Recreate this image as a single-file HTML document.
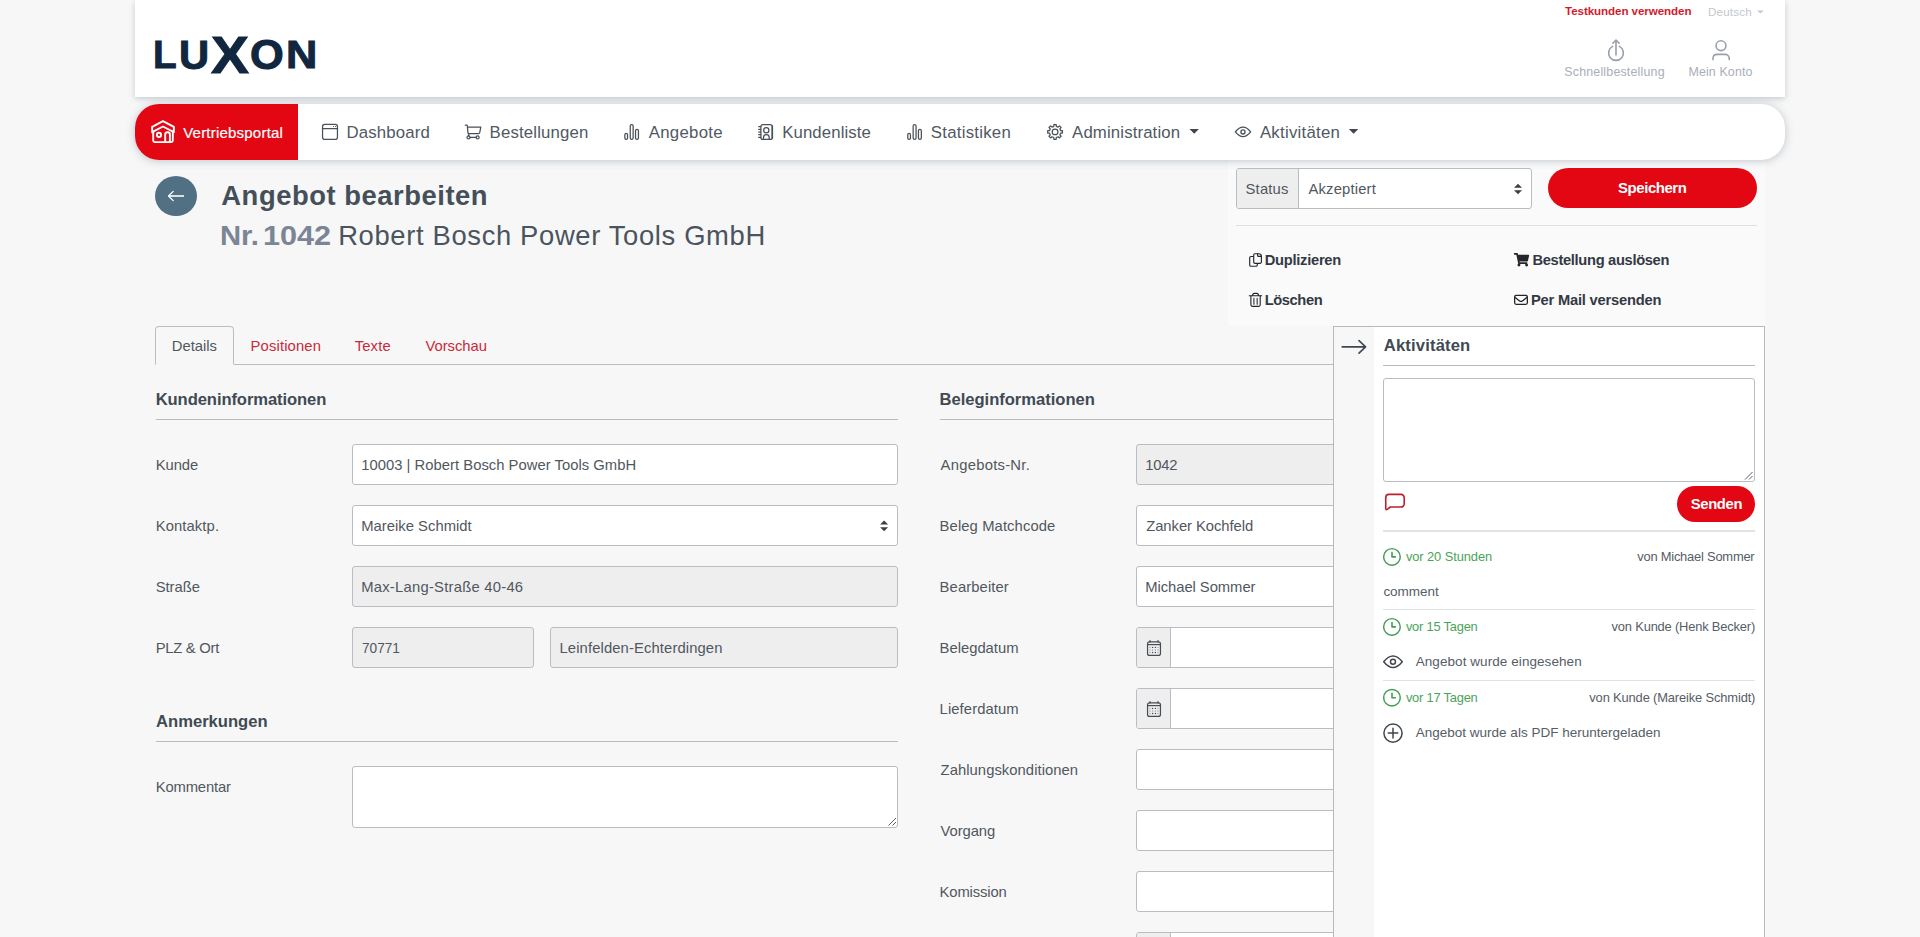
<!DOCTYPE html>
<html lang="de">
<head>
<meta charset="utf-8">
<title>Angebot bearbeiten</title>
<style>
*{box-sizing:border-box;margin:0;padding:0}
html,body{width:1920px;height:937px;overflow:hidden}
body{background:#f7f7f7;font-family:"Liberation Sans",Arial,sans-serif;color:#495057;font-size:15.3px;position:relative}
.t{position:absolute;white-space:nowrap;line-height:1;display:block;font-weight:normal;text-decoration:none}

.lg{font-weight:bold;color:#10273f;transform-origin:0 0;-webkit-text-stroke:1px #10273f}
#ico{position:absolute;left:0;top:0;width:1920px;height:937px;pointer-events:none;z-index:50}
#hdr{position:absolute;left:135px;top:0;width:1650px;height:97px;background:#fff;box-shadow:0 2px 6px rgba(60,80,100,.26)}
#nav{position:absolute;left:135px;top:104px;width:1650px;height:56px;background:#fff;border-radius:24px;box-shadow:0 1px 8px rgba(60,80,100,.30);overflow:hidden}
#navred{position:absolute;left:0;top:0;width:163px;height:56px;background:#e30613}
#sidebg{position:absolute;left:1228px;top:160px;width:537px;height:166px;background:#fafafa}

.inp{position:absolute;border:1px solid #b9bdc3;border-radius:3px;background:#fff}
.dis{background:#eeeeee}
.hr{position:absolute;height:1px;background:#b7bcc3}
.btn{position:absolute;background:#e30613;border-radius:22px}
#back{position:absolute;left:155px;top:175.8px;width:42px;height:40px;border-radius:50%;background:#527083}
#tab1{position:absolute;left:155px;top:326px;width:79px;height:39px;border:1px solid #b9bec6;border-bottom-color:#f7f7f7;border-radius:4px 4px 0 0;background:#f7f7f7}
#panel{position:absolute;left:1333px;top:326px;width:432px;height:620px;background:#fff;border:1px solid #b5bac2}
#strip{position:absolute;left:0;top:0;width:40px;height:100%;background:#f7f7f7}
.pre{position:absolute;left:0;top:0;height:100%;background:#eeeeee;border-right:1px solid #b9bdc3;border-radius:2px 0 0 2px}
</style>
</head>
<body>
<div id="sidebg"></div>
<header id="hdr"></header>
<nav id="nav"><div id="navred"></div></nav>
<div id="logo"><span class="t lg" style="left:153.24px;top:35.06px;font-size:41.6px;transform:scale(0.9304,0.9484)">L</span><span class="t lg" style="left:178.79px;top:34.98px;font-size:41.6px;transform:scale(1.0038,0.9645)">U</span><span class="t lg" style="left:211.1px;top:28.84px;font-size:52px;transform:scale(1.0941,0.9939)">X</span><span class="t lg" style="left:249.86px;top:33.02px;font-size:41.6px;transform:scale(1.0433,1.03)">O</span><span class="t lg" style="left:286.02px;top:35.06px;font-size:41.6px;transform:scale(1.0423,0.9484)">N</span></div>
<a class="t" style="left:1565.00px;top:5.00px;font-size:11.6px;letter-spacing:-0.079px;color:#d21a2c;font-weight:bold">Testkunden verwenden</a><span class="t" style="left:1707.90px;top:5.90px;font-size:11.6px;letter-spacing:0.217px;color:#c3c7ce">Deutsch</span><span class="t" style="left:1564.30px;top:65.60px;font-size:12.4px;letter-spacing:0.194px;color:#a9aeb8">Schnellbestellung</span><span class="t" style="left:1688.50px;top:65.60px;font-size:12.4px;letter-spacing:0.133px;color:#a9aeb8">Mein Konto</span>
<a class="t" style="left:183.20px;top:124.80px;font-size:15.0px;letter-spacing:0.214px;color:#ffffff;-webkit-text-stroke:.2px #fff">Vertriebsportal</a><a class="t" style="left:346.60px;top:124.80px;font-size:16.8px;letter-spacing:0.137px;color:#505962">Dashboard</a><a class="t" style="left:489.60px;top:124.80px;font-size:16.8px;letter-spacing:0.155px;color:#505962">Bestellungen</a><a class="t" style="left:648.80px;top:124.80px;font-size:16.8px;letter-spacing:0.271px;color:#505962">Angebote</a><a class="t" style="left:782.20px;top:124.80px;font-size:16.8px;letter-spacing:0.100px;color:#505962">Kundenliste</a><a class="t" style="left:930.80px;top:124.80px;font-size:16.8px;letter-spacing:0.250px;color:#505962">Statistiken</a><a class="t" style="left:1072.10px;top:124.80px;font-size:16.8px;letter-spacing:0.123px;color:#505962">Administration</a><a class="t" style="left:1259.90px;top:124.80px;font-size:16.8px;letter-spacing:0.260px;color:#505962">Aktivitäten</a>

<div id="back"></div>
<h1 class="t" style="left:221.30px;top:181.80px;font-size:27.4px;letter-spacing:0.535px;color:#454f5a;font-weight:bold">Angebot bearbeiten</h1>
<h2><span class="t" style="left:220.17px;top:221.80px;font-size:27.4px;color:#7b8595;transform-origin:0 0;transform:scaleX(1.0667);font-weight:bold">Nr.</span><span class="t" style="left:263.28px;top:221.80px;font-size:27.4px;color:#7b8595;transform-origin:0 0;transform:scaleX(1.1186);font-weight:bold">1042</span><span class="t" style="left:338.20px;top:221.80px;font-size:27.4px;letter-spacing:0.643px;color:#4a545e">Robert Bosch Power Tools GmbH</span></h2>

<div class="inp " style="left:1236px;top:168px;width:296px;height:41px"><div class="pre" style="width:62px"></div></div>
<span class="t" style="left:1245.50px;top:181.80px;font-size:14.8px;letter-spacing:0.200px;color:#50575e">Status</span><span class="t" style="left:1308.50px;top:181.80px;font-size:14.8px;letter-spacing:0.167px;color:#50575e">Akzeptiert</span>
<div class="btn" style="left:1548px;top:168px;width:209px;height:40px"></div><span class="t" style="left:1618.10px;top:181.00px;font-size:14.9px;letter-spacing:-0.412px;color:#ffffff;font-weight:bold">Speichern</span>
<div class="hr" style="left:1236px;top:225px;width:521px;background:#dcdfe3"></div>
<a class="t" style="left:1264.70px;top:252.90px;font-size:14.7px;letter-spacing:-0.260px;color:#333944;font-weight:bold">Duplizieren</a><a class="t" style="left:1532.50px;top:252.90px;font-size:14.7px;letter-spacing:-0.328px;color:#333944;font-weight:bold">Bestellung auslösen</a><a class="t" style="left:1264.70px;top:292.90px;font-size:14.7px;letter-spacing:-0.400px;color:#333944;font-weight:bold">Löschen</a><a class="t" style="left:1531.00px;top:292.90px;font-size:14.7px;letter-spacing:-0.200px;color:#333944;font-weight:bold">Per Mail versenden</a>

<div class="hr" style="left:155px;top:364px;width:1178px;background:#b9bec6"></div>
<div id="tab1"></div>
<a class="t" style="left:171.80px;top:338.70px;font-size:14.8px;letter-spacing:-0.033px;color:#50575e">Details</a><a class="t" style="left:250.60px;top:338.70px;font-size:14.8px;letter-spacing:0.133px;color:#c82a3b">Positionen</a><a class="t" style="left:354.70px;top:338.70px;font-size:14.8px;letter-spacing:0.150px;color:#c82a3b">Texte</a><a class="t" style="left:425.40px;top:338.70px;font-size:14.8px;letter-spacing:-0.014px;color:#c82a3b">Vorschau</a>

<!-- left column -->
<h5 class="t" style="left:155.70px;top:392.00px;font-size:16.6px;letter-spacing:-0.094px;color:#414a53;font-weight:bold">Kundeninformationen</h5>
<div class="hr" style="left:156px;top:419px;width:742px"></div>
<label class="t" style="left:155.70px;top:458.10px;font-size:14.8px;letter-spacing:-0.050px;color:#50575e">Kunde</label><div class="inp " style="left:352px;top:444px;width:546px;height:41px"></div><span class="t" style="left:361.20px;top:458.10px;font-size:14.8px;letter-spacing:0.022px;color:#50575e">10003 | Robert Bosch Power Tools GmbH</span>
<label class="t" style="left:155.70px;top:519.10px;font-size:14.8px;letter-spacing:0.100px;color:#50575e">Kontaktp.</label><div class="inp " style="left:352px;top:505px;width:546px;height:41px"></div><span class="t" style="left:361.20px;top:519.10px;font-size:14.8px;letter-spacing:0.021px;color:#50575e">Mareike Schmidt</span>
<label class="t" style="left:155.70px;top:580.10px;font-size:14.8px;letter-spacing:-0.040px;color:#50575e">Straße</label><div class="inp dis" style="left:352px;top:566px;width:546px;height:41px"></div><span class="t" style="left:361.20px;top:580.10px;font-size:14.8px;letter-spacing:0.240px;color:#50575e">Max-Lang-Straße 40-46</span>
<label class="t" style="left:155.70px;top:641.10px;font-size:14.8px;letter-spacing:-0.275px;color:#50575e">PLZ &amp; Ort</label><div class="inp dis" style="left:352px;top:627px;width:182px;height:41px"></div><span class="t" style="left:362.20px;top:641.10px;font-size:14.8px;color:#50575e;transform-origin:0 0;transform:scaleX(0.9220)">70771</span><div class="inp dis" style="left:550px;top:627px;width:348px;height:41px"></div><span class="t" style="left:559.50px;top:641.10px;font-size:14.8px;letter-spacing:0.114px;color:#50575e">Leinfelden-Echterdingen</span>
<h5 class="t" style="left:156.10px;top:714.40px;font-size:16.6px;letter-spacing:-0.010px;color:#414a53;font-weight:bold">Anmerkungen</h5>
<div class="hr" style="left:156px;top:741px;width:742px"></div>
<label class="t" style="left:155.70px;top:780.20px;font-size:14.8px;letter-spacing:-0.150px;color:#50575e">Kommentar</label><div class="inp " style="left:352px;top:766px;width:546px;height:62px"></div>

<!-- right column -->
<h5 class="t" style="left:939.60px;top:392.00px;font-size:16.6px;letter-spacing:-0.035px;color:#414a53;font-weight:bold">Beleginformationen</h5>
<div class="hr" style="left:940px;top:419px;width:400px"></div>
<label class="t" style="left:940.60px;top:458.10px;font-size:14.8px;letter-spacing:0.255px;color:#50575e">Angebots-Nr.</label><div class="inp dis" style="left:1136px;top:444px;width:300px;height:41px"></div><span class="t" style="left:1145.20px;top:458.10px;font-size:14.8px;letter-spacing:-0.200px;color:#50575e">1042</span>
<label class="t" style="left:939.60px;top:519.10px;font-size:14.8px;letter-spacing:0.100px;color:#50575e">Beleg Matchcode</label><div class="inp " style="left:1136px;top:505px;width:300px;height:41px"></div><span class="t" style="left:1146.20px;top:519.10px;font-size:14.8px;letter-spacing:-0.050px;color:#50575e">Zanker Kochfeld</span>
<label class="t" style="left:939.60px;top:580.10px;font-size:14.8px;letter-spacing:0.100px;color:#50575e">Bearbeiter</label><div class="inp " style="left:1136px;top:566px;width:300px;height:41px"></div><span class="t" style="left:1145.20px;top:580.10px;font-size:14.8px;letter-spacing:-0.054px;color:#50575e">Michael Sommer</span>
<label class="t" style="left:939.60px;top:641.10px;font-size:14.8px;letter-spacing:-0.011px;color:#50575e">Belegdatum</label><div class="inp " style="left:1136px;top:627px;width:300px;height:41px"><div class="pre" style="width:34px"></div></div>
<label class="t" style="left:939.60px;top:702.10px;font-size:14.8px;letter-spacing:0.090px;color:#50575e">Lieferdatum</label><div class="inp " style="left:1136px;top:688px;width:300px;height:41px"><div class="pre" style="width:34px"></div></div>
<label class="t" style="left:940.60px;top:763.10px;font-size:14.8px;letter-spacing:0.050px;color:#50575e">Zahlungskonditionen</label><div class="inp " style="left:1136px;top:749px;width:300px;height:41px"></div>
<label class="t" style="left:940.60px;top:824.10px;font-size:14.8px;letter-spacing:-0.100px;color:#50575e">Vorgang</label><div class="inp " style="left:1136px;top:810px;width:300px;height:41px"></div>
<label class="t" style="left:939.60px;top:885.10px;font-size:14.8px;letter-spacing:-0.138px;color:#50575e">Komission</label><div class="inp " style="left:1136px;top:871px;width:300px;height:41px"></div>
<div class="inp " style="left:1136px;top:932px;width:300px;height:41px"><div class="pre" style="width:34px"></div></div>

<!-- activity panel -->
<aside id="panel"><div id="strip"></div></aside>
<h5 class="t" style="left:1383.80px;top:337.70px;font-size:16.6px;letter-spacing:0.160px;color:#414a53;font-weight:bold">Aktivitäten</h5>
<div class="hr" style="left:1383px;top:365px;width:372px"></div>
<div class="inp " style="left:1383px;top:378px;width:372px;height:104px"></div>
<div class="btn" style="left:1677px;top:486px;width:78px;height:35.5px"></div><span class="t" style="left:1690.70px;top:497.30px;font-size:14.8px;letter-spacing:-0.320px;color:#ffffff;font-weight:bold">Senden</span>
<div class="hr" style="left:1383px;top:530px;width:372px;height:2px;background:#e2e3e5"></div>
<span class="t" style="left:1405.90px;top:551.30px;font-size:12.9px;letter-spacing:-0.092px;color:#4aa35a">vor 20 Stunden</span><span class="t" style="left:1637.20px;top:551.30px;font-size:12.9px;letter-spacing:-0.212px;color:#555d67">von Michael Sommer</span><span class="t" style="left:1383.40px;top:585.10px;font-size:13.5px;letter-spacing:-0.033px;color:#555d67">comment</span>
<div class="hr" style="left:1383px;top:609px;width:372px;background:#dfe2e5"></div>
<span class="t" style="left:1405.90px;top:621.20px;font-size:12.9px;letter-spacing:-0.218px;color:#4aa35a">vor 15 Tagen</span><span class="t" style="left:1611.60px;top:621.20px;font-size:12.9px;letter-spacing:-0.182px;color:#555d67">von Kunde (Henk Becker)</span><span class="t" style="left:1415.70px;top:654.90px;font-size:13.5px;letter-spacing:0.070px;color:#555d67">Angebot wurde eingesehen</span>
<div class="hr" style="left:1383px;top:680px;width:372px;background:#dfe2e5"></div>
<span class="t" style="left:1405.90px;top:692.00px;font-size:12.9px;letter-spacing:-0.218px;color:#4aa35a">vor 17 Tagen</span><span class="t" style="left:1589.30px;top:692.00px;font-size:12.9px;letter-spacing:-0.142px;color:#555d67">von Kunde (Mareike Schmidt)</span><span class="t" style="left:1415.70px;top:726.00px;font-size:13.5px;letter-spacing:0.008px;color:#555d67">Angebot wurde als PDF heruntergeladen</span>

<svg id="ico" viewBox="0 0 1920 937">
<g fill="none" stroke="#9aa0ab" stroke-width="1.6" stroke-linecap="round" stroke-linejoin="round">
<path d="M1612.6,46.4 A7.4,7.4 0 1 0 1619.4,46.4"/>
<path d="M1616,55 V40.2 M1612.9,43.2 L1616,40 L1619.1,43.2"/>
<circle cx="1721" cy="45.7" r="4.9"/>
<path d="M1713,59.6 V58 A4,4 0 0 1 1717,54.4 H1725 A4,4 0 0 1 1729.2,58 V59.6"/>
</g>
<path d="M1757,10.4 H1763.8 L1760.4,13.6Z" fill="#c3c7ce"/>
<g fill="none" stroke="#fff" stroke-width="1.9" stroke-linejoin="round" stroke-linecap="round">
<path d="M152.15,132.2 V126.9 L162.95,121.1 L173.85,126.9 V132.2 L162.95,126.5 Z"/>
<path d="M153.2,131.8 V140.6 A1.5,1.5 0 0 0 154.7,142.1 H171.3 A1.5,1.5 0 0 0 172.8,140.6 V131.8"/>
<circle cx="159" cy="134.9" r="2.1"/>
<path d="M165.2,142 V134.6 A2.35,2.35 0 0 1 169.9,134.6 V142"/>
</g>
<g fill="none" stroke="#495057" stroke-width="1.25" stroke-linejoin="round" stroke-linecap="round">
<rect x="322.55" y="124.35" width="14.9" height="15.1" rx="2.2"/><path d="M322.5,128.5 H337.5"/>
<path d="M465.3,125.2 H466.6 Q467.3,125.2 467.35,126 L467.9,132.6 Q468,133.6 469,133.6 H478.6 Q479.5,133.6 479.7,132.7 L480.8,127.1 H467.5"/>
<path d="M468.9,133.7 L468.6,135.9 M470,137.4 H476.1"/><circle cx="468.5" cy="137.4" r="1.5"/><circle cx="477.6" cy="137.4" r="1.5"/>
<rect x="624.85" y="133.30" width="2.7" height="6.15" rx="1.35"/><rect x="630.25" y="124.55" width="2.9" height="14.90" rx="1.45"/><rect x="635.55" y="129.30" width="2.9" height="10.15" rx="1.45"/>
<rect x="907.75" y="133.30" width="2.7" height="6.15" rx="1.35"/><rect x="913.15" y="124.55" width="2.9" height="14.90" rx="1.45"/><rect x="918.45" y="129.30" width="2.9" height="10.15" rx="1.45"/>
<rect x="760.9" y="124.55" width="11.3" height="14.9" rx="2"/>
<path d="M758.7,126.6 H760.6 M758.7,129.3 H760.6 M758.7,132 H760.6 M758.7,134.7 H760.6 M758.7,137.4 H760.6"/>
<circle cx="766.3" cy="130.2" r="2.6"/><path d="M763.5,139.4 V137.4 A2.85,2.85 0 0 1 769.2,137.4 V139.4"/>
<path d="M772.35,126 V138" stroke-width="1.5"/>
<path d="M1053.81,126.34 L1053.88,124.54 L1056.22,124.54 L1056.29,126.34 L1058.10,127.09 L1059.43,125.87 L1061.08,127.52 L1059.86,128.85 L1060.61,130.66 L1062.41,130.73 L1062.41,133.07 L1060.61,133.14 L1059.86,134.95 L1061.08,136.28 L1059.43,137.93 L1058.10,136.71 L1056.29,137.46 L1056.22,139.26 L1053.88,139.26 L1053.81,137.46 L1052.00,136.71 L1050.67,137.93 L1049.02,136.28 L1050.24,134.95 L1049.49,133.14 L1047.69,133.07 L1047.69,130.73 L1049.49,130.66 L1050.24,128.85 L1049.02,127.52 L1050.67,125.87 L1052.00,127.09Z"/><circle cx="1055.05" cy="131.9" r="2.85"/>
</g>
<circle cx="333.5" cy="126.5" r=".6" fill="#495057"/><circle cx="335.5" cy="126.5" r=".6" fill="#495057"/>
<path d="M1235.37,131.9 Q1243,122.47 1250.63,131.9 Q1243,141.33 1235.37,131.9Z" fill="none" stroke="#495057" stroke-width="1.35" stroke-linejoin="round"/><circle cx="1243" cy="131.9" r="2.05" fill="none" stroke="#495057" stroke-width="1.35"/>
<path d="M1189.5,129.1 H1198.9 L1194.2,133.8Z M1348.9,129.1 H1358.3 L1353.6,133.8Z" fill="#3f464d"/>
<path d="M184,196 H168.8" fill="none" stroke="#e8eef2" stroke-width="1.8"/><path d="M173.2,191.4 L168.5,196 L173.2,200.6" fill="none" stroke="#fff" stroke-width="1.3" stroke-linecap="round" stroke-linejoin="round"/>
<path d="M1514,187.7 L1518,183.7 L1522,187.7Z M1514,190.3 L1518,194.3 L1522,190.3Z" fill="#3a4047"/>
<path d="M880.1,524.6 L884.1,520.6 L888.1,524.6Z M880.1,527.1999999999999 L884.1,531.1999999999999 L888.1,527.1999999999999Z" fill="#3a4047"/>
<g fill="none" stroke="#23272b" stroke-width="1.15" stroke-linejoin="round" stroke-linecap="round">
<path d="M1258.6,253.7 H1255 A1.3,1.3 0 0 0 1253.7,255 V262 A1.3,1.3 0 0 0 1255,263.3 H1260.1 A1.3,1.3 0 0 0 1261.4,262 V256.5 A2.8,2.8 0 0 0 1258.6,253.7 Z"/>
<path d="M1257.6,253.9 V255.4 A1,1 0 0 0 1258.6,256.4 H1261.2"/>
<path d="M1253.4,256.5 H1251 A1.3,1.3 0 0 0 1249.7,257.8 V264.9 A1.3,1.3 0 0 0 1251,266.2 H1256 A1.3,1.3 0 0 0 1257.3,264.9 V263.6"/>
<path d="M1249.3,295.7 H1261.7 M1252.4,295.4 Q1253,293.4 1254.3,293.4 H1256.8 Q1258.1,293.4 1258.7,295.4"/>
<path d="M1250.9,296 V304.7 A1.6,1.6 0 0 0 1252.5,306.3 H1258.6 A1.6,1.6 0 0 0 1260.2,304.7 V296"/>
<path d="M1253.9,298.3 V304.2 M1257.2,298.3 V304.2" stroke-width="1.3" stroke="#4b5055"/>
<rect x="1514.65" y="295.45" width="12.7" height="8.9" rx="1.5" stroke-width="1.3"/>
<path d="M1514.9,297.3 L1519.6,300.9 Q1521,302 1522.4,300.9 L1527.1,297.3" stroke-width="1.3"/>
</g>
<g transform="translate(1513.85,253) scale(0.02656)"><path fill="#23272b" d="M528.12 301.319l47.273-208C578.806 78.301 567.391 64 551.99 64H159.208l-9.166-44.81C147.758 8.021 137.93 0 126.529 0H24C10.745 0 0 10.745 0 24v16c0 13.255 10.745 24 24 24h69.883l70.248 343.435C147.325 417.1 136 435.222 136 456c0 30.928 25.072 56 56 56s56-25.072 56-56c0-15.674-6.447-29.835-16.824-40h209.647C430.447 426.165 424 440.326 424 456c0 30.928 25.072 56 56 56s56-25.072 56-56c0-22.172-12.888-41.332-31.579-50.405l5.517-24.276c3.413-15.018-8.002-29.319-23.403-29.319H218.117l-6.545-32h293.145c11.206 0 20.92-7.754 23.403-18.681z"/></g>
<rect x="1147.55" y="641.8499999999999" width="12.9" height="13.6" rx="2" fill="none" stroke="#474c52" stroke-width="1.2"/><path d="M1147.5,644.5999999999999 H1160.5" stroke="#474c52" stroke-width="1.2"/><path d="M1150,640.5999999999999 V642.0999999999999 M1158,640.5999999999999 V642.0999999999999" stroke="#4a5056" stroke-width="1.3" stroke-linecap="round"/><circle cx="1150" cy="647.4" r=".68" fill="#43484e" opacity="0.45"/><circle cx="1152.6" cy="647.4" r=".68" fill="#43484e" opacity="1"/><circle cx="1155.4" cy="647.4" r=".68" fill="#43484e" opacity="1"/><circle cx="1158" cy="647.4" r=".68" fill="#43484e" opacity="0.45"/><circle cx="1150" cy="650.0" r=".68" fill="#43484e" opacity="0.45"/><circle cx="1152.6" cy="650.0" r=".68" fill="#43484e" opacity="0.45"/><circle cx="1155.4" cy="650.0" r=".68" fill="#43484e" opacity="0.45"/><circle cx="1158" cy="650.0" r=".68" fill="#43484e" opacity="0.45"/><circle cx="1150" cy="652.5" r=".68" fill="#43484e" opacity="0.45"/><circle cx="1152.6" cy="652.5" r=".68" fill="#43484e" opacity="1"/><circle cx="1155.4" cy="652.5" r=".68" fill="#43484e" opacity="1"/><circle cx="1158" cy="652.5" r=".68" fill="#43484e" opacity="0.45"/>
<rect x="1147.55" y="702.8499999999999" width="12.9" height="13.6" rx="2" fill="none" stroke="#474c52" stroke-width="1.2"/><path d="M1147.5,705.5999999999999 H1160.5" stroke="#474c52" stroke-width="1.2"/><path d="M1150,701.5999999999999 V703.0999999999999 M1158,701.5999999999999 V703.0999999999999" stroke="#4a5056" stroke-width="1.3" stroke-linecap="round"/><circle cx="1150" cy="708.4" r=".68" fill="#43484e" opacity="0.45"/><circle cx="1152.6" cy="708.4" r=".68" fill="#43484e" opacity="1"/><circle cx="1155.4" cy="708.4" r=".68" fill="#43484e" opacity="1"/><circle cx="1158" cy="708.4" r=".68" fill="#43484e" opacity="0.45"/><circle cx="1150" cy="711.0" r=".68" fill="#43484e" opacity="0.45"/><circle cx="1152.6" cy="711.0" r=".68" fill="#43484e" opacity="0.45"/><circle cx="1155.4" cy="711.0" r=".68" fill="#43484e" opacity="0.45"/><circle cx="1158" cy="711.0" r=".68" fill="#43484e" opacity="0.45"/><circle cx="1150" cy="713.5" r=".68" fill="#43484e" opacity="0.45"/><circle cx="1152.6" cy="713.5" r=".68" fill="#43484e" opacity="1"/><circle cx="1155.4" cy="713.5" r=".68" fill="#43484e" opacity="1"/><circle cx="1158" cy="713.5" r=".68" fill="#43484e" opacity="0.45"/>
<path d="M1342.2,346.9 H1365.2 M1359,340.6 L1365.6,346.9 L1359,353.2" fill="none" stroke="#3f4851" stroke-width="1.6" stroke-linecap="round" stroke-linejoin="round"/>
<path d="M1385.75,508.6 V497.6 A3.2,3.2 0 0 1 1388.95,494.4 H1401 A3.2,3.2 0 0 1 1404.2,497.6 V503.8 A3.2,3.2 0 0 1 1401,507 H1390.3 L1387.2,509.4 Q1385.75,510.3 1385.75,508.6Z" fill="none" stroke="#bd1e2c" stroke-width="1.6" stroke-linejoin="round"/>
<circle cx="1391.95" cy="556.9" r="8.3" fill="none" stroke="#3f9c52" stroke-width="1.45"/><path d="M1392,552.6 V556.9 H1395.3" fill="none" stroke="#3f9c52" stroke-width="1.6" stroke-linecap="round" stroke-linejoin="round"/>
<circle cx="1391.95" cy="626.9" r="8.3" fill="none" stroke="#3f9c52" stroke-width="1.45"/><path d="M1392,622.6 V626.9 H1395.3" fill="none" stroke="#3f9c52" stroke-width="1.6" stroke-linecap="round" stroke-linejoin="round"/>
<circle cx="1391.95" cy="697.7" r="8.3" fill="none" stroke="#3f9c52" stroke-width="1.45"/><path d="M1392,693.4000000000001 V697.7 H1395.3" fill="none" stroke="#3f9c52" stroke-width="1.6" stroke-linecap="round" stroke-linejoin="round"/>
<path d="M1383.70,661.8 Q1393,650.30 1402.30,661.8 Q1393,673.30 1383.70,661.8Z" fill="none" stroke="#42474d" stroke-width="1.45" stroke-linejoin="round"/><circle cx="1393" cy="661.8" r="2.50" fill="none" stroke="#42474d" stroke-width="1.45"/>
<circle cx="1393" cy="733.1" r="9.1" fill="none" stroke="#42474d" stroke-width="1.5"/><path d="M1393,728.3 V737.9 M1388.2,733.1 H1397.8" stroke="#42474d" stroke-width="1.5" stroke-linecap="round"/>
<path d="M1745,479.5 L1752.5,472 M1749,479.5 L1752.5,476" stroke="#5a5f66" stroke-width="1" fill="none"/>
<path d="M888.5,825.5 L896.0,818 M892.5,825.5 L896.0,822" stroke="#5a5f66" stroke-width="1" fill="none"/>
</svg>
</body>
</html>
